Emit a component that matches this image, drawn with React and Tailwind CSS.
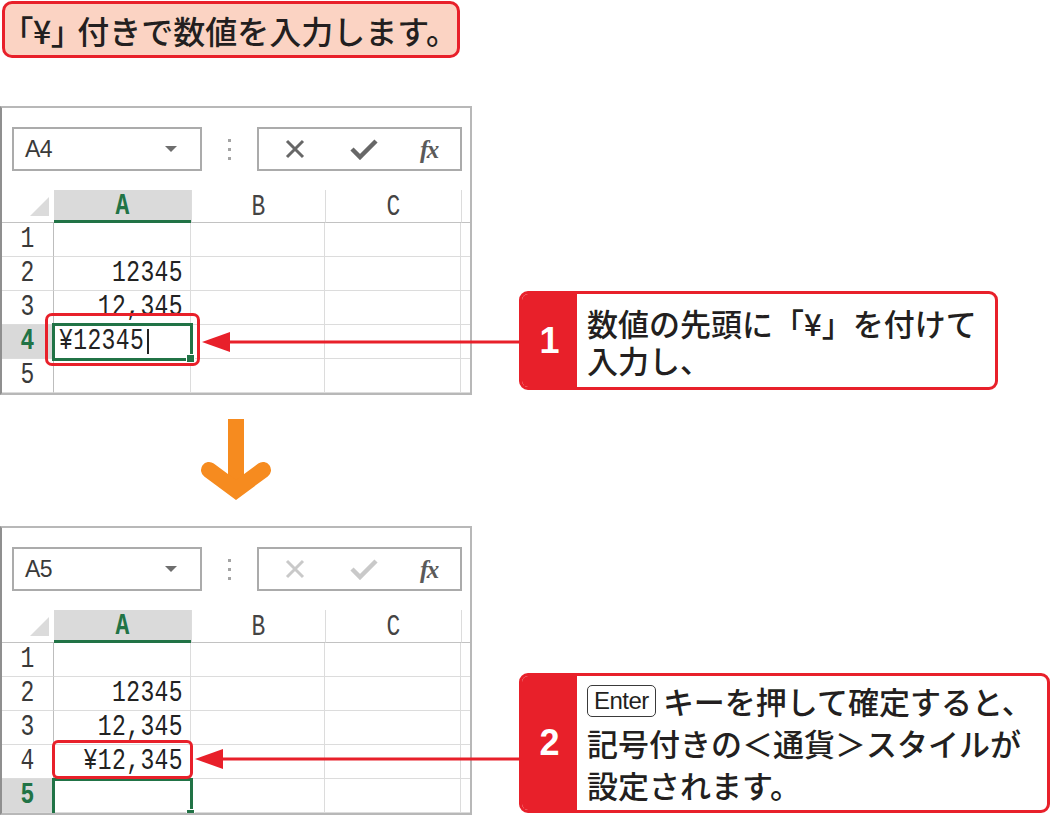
import React from 'react';

/**
 * Excel-style tutorial page: entering a value with "¥"
 */

const Mono = ({ children, className = '' }) => (
  <span className={`inline-block font-[Liberation_Mono,monospace] text-[23px] leading-none tracking-[0.4px] scale-y-[1.3] ${className}`}>
    {children}
  </span>
);

const NameBox = ({ name }) => (
  <div className="flex items-center justify-between w-[190px] h-[44px] ml-[10px] border-2 border-[#ababab] pl-[11px] pr-[23px]">
    <span className="font-[Liberation_Sans,sans-serif] text-[23px] text-[#3a3a3a] tracking-[-0.5px]">{name}</span>
    <svg width="12" height="7" viewBox="0 0 12 7">
      <polygon points="0,0 12,0 6,6" fill="#6e6e6e" />
    </svg>
  </div>
);

const FormulaBar = ({ dim }) => {
  const c = dim ? '#c9c9c9' : '#676767';
  return (
    <div className="flex items-center">
      {/* colon grip */}
      <div className="flex flex-col gap-[6px] ml-[26px] mr-[26px]">
        <span className="w-[3px] h-[3px] bg-[#a4a4a4]" />
        <span className="w-[3px] h-[3px] bg-[#a4a4a4]" />
        <span className="w-[3px] h-[3px] bg-[#a4a4a4]" />
      </div>
      <div className="flex items-center w-[205px] h-[44px] border-2 border-[#ababab]">
        <svg className="ml-[25px]" width="22" height="22" viewBox="0 0 22 22">
          <path d="M3 3 L19 19 M19 3 L3 19" stroke={c} strokeWidth="3" />
        </svg>
        <svg className="ml-[44px]" width="28" height="22" viewBox="0 0 28 22">
          <path d="M2 11 L10 19 L26 3" stroke={c} strokeWidth="4.5" fill="none" />
        </svg>
        <span className="ml-[42px] font-[Liberation_Serif,serif] italic font-bold text-[25px] leading-none text-[#5a5a5a] tracking-[-1.5px]">
          fx
        </span>
      </div>
    </div>
  );
};

const Sheet = ({ active, row4, editing }) => {
  const rows = [1, 2, 3, 4, 5];
  const values = { 1: '', 2: '12345', 3: '12,345', 4: row4, 5: '' };
  return (
    <div className="relative grid grid-cols-[52px_137px_134px_136px_1fr] grid-rows-[33px_repeat(5,34px)]">
      {/* header row */}
      <div className="relative border-b border-[#c2c2c2]">
        <svg className="absolute right-[5px] bottom-[6px]" width="19" height="19" viewBox="0 0 19 19">
          <polygon points="19,0 19,19 0,19" fill="#dbdbdb" />
        </svg>
      </div>
      <div className="flex items-center justify-center pt-[3px] bg-[#dadada] border-b-[3px] border-[#217346]">
        <Mono className="font-bold text-[#217346]">A</Mono>
      </div>
      <div className="flex items-center justify-center pt-[2px] border-l border-[#dcdcdc] border-b border-b-[#c2c2c2]">
        <Mono className="text-[#444]">B</Mono>
      </div>
      <div className="flex items-center justify-center pt-[2px] border-l border-[#dcdcdc] border-b border-b-[#c2c2c2]">
        <Mono className="text-[#444]">C</Mono>
      </div>
      <div className="border-l border-[#dcdcdc] border-b border-b-[#c2c2c2]" />

      {rows.map((r) => (
        <React.Fragment key={r}>
          <div
            className={`flex items-center justify-center border-r border-[#bdbdbd] border-b border-b-[#dcdcdc] ${
              r === active ? 'bg-[#d9d9d9]' : 'bg-white'
            }`}
          >
            <Mono className={r === active ? 'font-bold text-[#217346]' : 'text-[#3a3a3a]'}>{r}</Mono>
          </div>
          <div
            className={`flex items-center border-r border-b border-[#dcdcdc] ${
              r === 4 && editing ? 'justify-start pl-[5px]' : 'justify-end pr-[7px]'
            }`}
          >
            <Mono className="text-[#222]">{values[r]}</Mono>
            {r === 4 && editing && <span className="w-[2px] h-[25px] bg-[#222] ml-[3px]" />}
          </div>
          <div className="border-r border-b border-[#dcdcdc]" />
          <div className="border-r border-b border-[#dcdcdc]" />
          <div className="border-b border-[#dcdcdc]" />
        </React.Fragment>
      ))}

      {/* active cell */}
      <div
        className={`absolute left-[50px] w-[141px] border-[3px] border-[#217346] ${
          active === 4 ? 'top-[133px] h-[38px]' : 'top-[168px] h-[38px]'
        }`}
      >
        <span className="absolute -right-[5px] -bottom-[5px] w-[9px] h-[9px] bg-[#217346] border border-white" />
      </div>
    </div>
  );
};

const ExcelWindow = ({ name, active, row4, editing, dim }) => (
  <div className="w-[472px] h-[289px] border-2 border-[#b8b8b8] border-l-[#8f8f8f] bg-white overflow-hidden shrink-0">
    <div className="flex items-start pt-[19px] h-[82px]">
      <NameBox name={name} />
      <FormulaBar dim={dim} />
    </div>
    <Sheet active={active} row4={row4} editing={editing} />
  </div>
);

const Callout = ({ num, className = '', children }) => (
  <div className={`flex shrink-0 border-[3px] border-[#e8202a] rounded-[9px] overflow-hidden bg-white ${className}`}>
    <div className="w-[55px] shrink-0 bg-[#e8202a] flex items-center justify-center">
      <span className="font-[Liberation_Sans,sans-serif] font-bold text-[36px] leading-none text-white">{num}</span>
    </div>
    <div className="flex items-center pl-[10px] text-[31px] font-medium text-[#231f20]">{children}</div>
  </div>
);

const LeftArrow = ({ className, width }) => (
  <svg className={`absolute ${className}`} width={width} height="20" viewBox={`0 0 ${width} 20`}>
    <polygon points="0,10 28,0 28,20" fill="#e8202a" />
    <rect x="26" y="8.5" width={width - 26} height="3" fill="#e8202a" />
  </svg>
);

export default function App() {
  return (
    <div className="relative w-[1052px] h-[815px] overflow-hidden bg-white font-[Noto_Sans_CJK_JP,sans-serif] text-[#231f20]">
      {/* Title */}
      <div className="ml-[2px] mt-[1px] w-[458px] h-[57px] flex items-center pl-[12px] border-[3px] border-[#e8202a] rounded-[10px] bg-[#fbd3c3]">
        <span className="text-[32px] font-medium leading-none whitespace-nowrap">
          <span className="[font-feature-settings:'palt'] mr-[10px]">「¥」</span>付きで数値を入力します。
        </span>
      </div>

      {/* Step 1 */}
      <div className="relative flex mt-[48px]">
        <ExcelWindow name="A4" active={4} row4="¥12345" editing />
        <Callout num="1" className="ml-[47px] mt-[185px] w-[479px] h-[99px]">
          <div className="leading-[37px]">
            <div>数値の先頭に「¥」を付けて</div>
            <div>入力し、</div>
          </div>
        </Callout>
        <div className="absolute left-[45px] top-[207px] w-[155px] h-[53px] border-[3px] border-[#e8202a] rounded-[7px]" />
        <LeftArrow className="left-[202px] top-[226px]" width={318} />
      </div>

      {/* Down arrow */}
      <svg className="ml-[198px] mt-[22px] mb-[25px] block" width="80" height="84" viewBox="198 417 80 84">
        <rect x="228" y="419" width="16" height="64" fill="#f68b1f" />
        <path d="M209 470 L236 490 L263 470" stroke="#f68b1f" strokeWidth="16" strokeLinecap="round" strokeLinejoin="miter" fill="none" />
      </svg>

      {/* Step 2 */}
      <div className="relative flex">
        <ExcelWindow name="A5" active={5} row4="¥12,345" dim />
        <Callout num="2" className="ml-[47px] mt-[147px] w-[531px] h-[140px]">
          <div className="leading-[42px]">
            <div className="flex items-center">
              <span className="inline-flex items-center h-[32px] px-[6px] mr-[7px] border-[1.5px] border-[#3a3a3a] rounded-[5px] font-[Liberation_Sans,sans-serif] font-normal text-[24px] leading-none tracking-[-0.5px]">
                Enter
              </span>
              <span>キーを押して確定すると、</span>
            </div>
            <div>記号付きの＜通貨＞スタイルが</div>
            <div>設定されます。</div>
          </div>
        </Callout>
        <div className="absolute left-[52px] top-[214px] w-[141px] h-[39px] border-[3px] border-[#e8202a] rounded-[6px]" />
        <LeftArrow className="left-[195px] top-[223px]" width={324} />
      </div>
    </div>
  );
}
